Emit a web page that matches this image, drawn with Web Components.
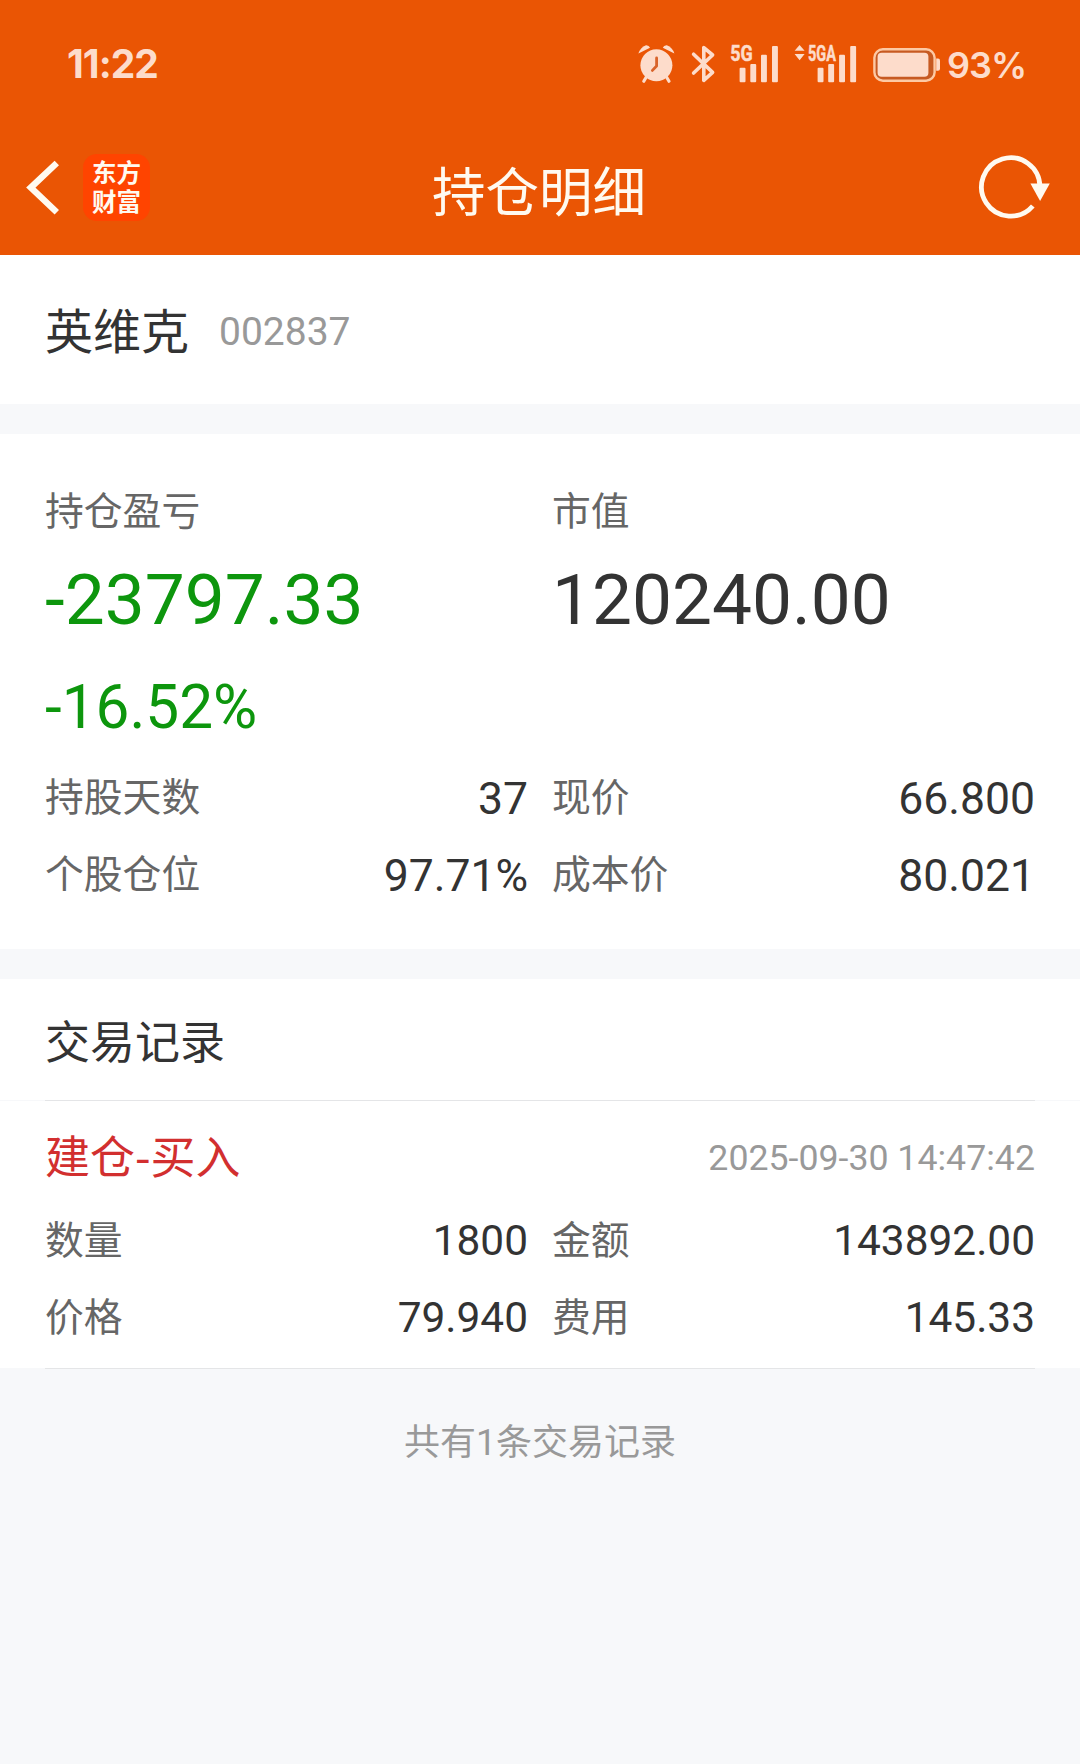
<!DOCTYPE html>
<html lang="zh-CN">
<head>
  <meta charset="utf-8">
  <meta name="viewport" content="width=device-width, initial-scale=1">
  <title>持仓明细</title>
  <style>
    body {
      margin: 0;
      min-height: 1764px;
      background: #f7f8fa;
      color: #333;
      font-family: Roboto, 'Noto Sans CJK SC', sans-serif;
    }
  </style>
</head>
<body>
  <status-bar time="11:22" battery="93%"></status-bar>
  <nav-bar>持仓明细</nav-bar>

  <stock-header code="002837">英维克</stock-header>

  <position-summary>
    <big-figure label="持仓盈亏" value="-23797.33" rate="-16.52%" class="down"></big-figure>
    <big-figure label="市值" value="120240.00"></big-figure>
    <data-pair label="持股天数">37</data-pair>
    <data-pair label="现价">66.800</data-pair>
    <data-pair label="个股仓位">97.71%</data-pair>
    <data-pair label="成本价">80.021</data-pair>
  </position-summary>

  <record-list heading="交易记录">
    <trade-record action="建仓-买入" time="2025-09-30 14:47:42">
      <data-pair label="数量">1800</data-pair>
      <data-pair label="金额">143892.00</data-pair>
      <data-pair label="价格">79.940</data-pair>
      <data-pair label="费用">145.33</data-pair>
    </trade-record>
    <span slot="footer">共有1条交易记录</span>
  </record-list>

  <script>
    class StatusBar extends HTMLElement {
      constructor () {
        super()
        this.shadow = this.attachShadow({ mode: 'open' })
      }

      connectedCallback () {
        this.render()
      }

      render () {
        this.shadow.innerHTML =
          /* html */`
            <style>
              :host {
                display: flex;
                justify-content: space-between;
                align-items: center;
                box-sizing: border-box;
                height: 120px;
                padding: 8px 54px 0 67px;
                background: #ea5504;
                color: #fddccb;
                font-family: Inter, Roboto, sans-serif;
              }

              .time {
                font-size: 39px;
                font-weight: 700;
                line-height: 40px;
                letter-spacing: -1px;
              }

              .icons {
                display: flex;
                align-items: center;
              }

              svg {
                display: block;
                overflow: visible;
                fill: currentColor;
              }

              .alarm { margin-right: 16px; }
              .bluetooth { margin-right: 14px; }
              .signal { margin-right: 17px; }
              .signal-a { margin-right: 15px; }
              .battery { margin-right: 6px; }

              text {
                font-family: Roboto, sans-serif;
                font-weight: 700;
                font-size: 22px;
                stroke: currentColor;
                stroke-width: 0.5px;
              }

              .percent {
                width: 79px;
                padding-top: 1px;
                font-size: 36px;
                font-weight: 600;
                line-height: 40px;
                letter-spacing: -1px;
                white-space: nowrap;
              }
            </style>

            <span class="time">${this.getAttribute('time')}</span>
            <div class="icons">
              <svg class="alarm" width="37" height="40" viewBox="0 0 37 40">
                <circle cx="18.4" cy="21.3" r="16"/>
                <path d="M0.4 9.4A13 13 0 0 1 8 1.2Q11 1 12 3.8Z"/>
                <path d="M36.4 9.4A13 13 0 0 0 28.8 1.2Q25.8 1 24.8 3.8Z"/>
                <path d="M8 33.5L5.8 37.2M28.8 33.5L31 37.2" stroke="currentColor" stroke-width="3.2" stroke-linecap="round"/>
                <path d="M18.6 14V22L14.4 26.4" fill="none" stroke="#d9632a" stroke-width="2.8" stroke-linecap="round" stroke-linejoin="round"/>
              </svg>
              <svg class="bluetooth" width="25" height="40" viewBox="0 0 25 40">
                <path d="M2.6 10.2L21.6 28.4L12.8 36.4V3.6L21.6 11L2.6 29" fill="none" stroke="currentColor" stroke-width="3.6" stroke-linecap="round" stroke-linejoin="round"/>
              </svg>
              <svg class="signal" width="48" height="40" viewBox="0 0 48 40">
                <text x="0.3" y="17" textLength="22.5" lengthAdjust="spacingAndGlyphs">5G</text>
                <rect x="9.6" y="23.8" width="5.9" height="14.4" rx="1"/>
                <rect x="20.3" y="20" width="5.9" height="18.2" rx="1"/>
                <rect x="31" y="10.8" width="5.9" height="27.4" rx="1"/>
                <rect x="42" y="2" width="5.9" height="36.2" rx="1"/>
              </svg>
              <svg class="signal-a" width="63" height="40" viewBox="0 0 63 40">
                <path d="M4.6 1L9.6 6.8H-0.4ZM4.6 16.2L9.6 10H-0.4Z"/>
                <text x="13" y="17" textLength="28" lengthAdjust="spacingAndGlyphs">5GA</text>
                <rect x="22.6" y="23.8" width="5.9" height="14.4" rx="1"/>
                <rect x="33.2" y="20" width="5.9" height="18.2" rx="1"/>
                <rect x="44.1" y="10.8" width="5.9" height="27.4" rx="1"/>
                <rect x="55.2" y="2" width="5.9" height="36.2" rx="1"/>
              </svg>
              <svg class="battery" width="68" height="40" viewBox="0 0 68 40">
                <rect x="1.4" y="5.3" width="60.2" height="31.4" rx="8.5" fill="#c75a22" stroke="#fdc9a4" stroke-width="2.4"/>
                <rect x="4.6" y="8.8" width="50.8" height="24" rx="4"/>
                <path d="M63.2 14.6H65Q67 14.6 67 16.6V24.8Q67 26.8 65 26.8H63.2Z"/>
              </svg>
              <span class="percent">${this.getAttribute('battery')}</span>
            </div>
          `
      }
    }

    class NavBar extends HTMLElement {
      constructor () {
        super()
        this.shadow = this.attachShadow({ mode: 'open' })
      }

      connectedCallback () {
        this.render()
      }

      render () {
        this.shadow.innerHTML =
          /* html */`
            <style>
              :host {
                display: grid;
                grid-template-columns: 1fr auto 1fr;
                align-items: center;
                box-sizing: border-box;
                height: 135px;
                padding: 0 28px 0 24px;
                background: #ea5504;
                color: #fffaf0;
              }

              svg {
                display: block;
                fill: none;
                stroke: currentColor;
              }

              .left {
                display: flex;
                align-items: center;
                gap: 21px;
              }

              .logo {
                display: flex;
                flex-direction: column;
                align-items: center;
                justify-content: center;
                width: 67px;
                height: 67px;
                border-radius: 14px;
                background: #ff4400;
                font-size: 24.5px;
                font-weight: 700;
                line-height: 29px;
              }

              h1 {
                margin: 0;
                padding: 13px 0 0 2px;
                font-size: 53.5px;
                font-weight: 400;
                line-height: 80px;
              }

              .refresh {
                justify-self: end;
                padding-bottom: 2px;
              }
            </style>

            <div class="left">
              <svg width="38" height="60" viewBox="0 0 38 60">
                <path d="M32.8 5L6.8 29.6L32.8 54.2" stroke-width="6.4"/>
              </svg>
              <div class="logo"><span>东方</span><span>财富</span></div>
            </div>
            <h1><slot></slot></h1>
            <svg class="refresh" width="74" height="66" viewBox="0 0 74 66">
              <path d="M61.9 32.5A29.2 29.2 0 1 0 54.8 52" stroke-width="4.8"/>
              <path d="M52.4 29.6H71.8L62.1 47Z" fill="currentColor" stroke="none"/>
            </svg>
          `
      }
    }

    class StockHeader extends HTMLElement {
      constructor () {
        super()
        this.shadow = this.attachShadow({ mode: 'open' })
      }

      connectedCallback () {
        this.render()
      }

      render () {
        this.shadow.innerHTML =
          /* html */`
            <style>
              :host {
                display: flex;
                align-items: center;
                gap: 30px;
                box-sizing: border-box;
                height: 149px;
                margin-bottom: 30px;
                padding: 0 45px;
                background: #fff;
              }

              .name {
                padding-top: 6px;
                font-size: 48px;
                line-height: 70px;
              }

              .code {
                padding-top: 4px;
                color: #999;
                font-size: 39px;
                line-height: 70px;
              }
            </style>

            <span class="name"><slot></slot></span>
            <span class="code">${this.getAttribute('code')}</span>
          `
      }
    }

    class PositionSummary extends HTMLElement {
      constructor () {
        super()
        this.shadow = this.attachShadow({ mode: 'open' })
      }

      connectedCallback () {
        this.render()
      }

      render () {
        this.shadow.innerHTML =
          /* html */`
            <style>
              :host {
                display: grid;
                grid-template-columns: 1fr 1fr;
                column-gap: 24px;
                align-content: start;
                box-sizing: border-box;
                height: 515px;
                margin-bottom: 30px;
                padding: 48px 45px 0;
                background: #fff;
              }
            </style>

            <slot></slot>
          `
      }
    }

    class BigFigure extends HTMLElement {
      constructor () {
        super()
        this.shadow = this.attachShadow({ mode: 'open' })
      }

      connectedCallback () {
        this.render()
      }

      render () {
        const rate = this.getAttribute('rate')

        this.shadow.innerHTML =
          /* html */`
            <style>
              :host {
                display: flex;
                flex-direction: column;
                height: 276px;
                color: #333;
              }

              :host(.down) {
                color: #0d960d;
              }

              .label {
                color: #666;
                font-size: 38.8px;
                line-height: 60px;
              }

              .value {
                font-size: 71.2px;
                line-height: 115px;
              }

              .rate {
                font-size: 60.3px;
                line-height: 102px;
              }
            </style>

            <span class="label">${this.getAttribute('label')}</span>
            <span class="value">${this.getAttribute('value')}</span>
            ${rate ? `<span class="rate">${rate}</span>` : ''}
          `
      }
    }

    class DataPair extends HTMLElement {
      constructor () {
        super()
        this.shadow = this.attachShadow({ mode: 'open' })
      }

      connectedCallback () {
        this.render()
      }

      render () {
        this.shadow.innerHTML =
          /* html */`
            <style>
              :host {
                display: flex;
                justify-content: space-between;
                height: 77px;
              }

              .label {
                padding-top: 1px;
                color: #666;
                font-size: 38.8px;
                line-height: 77px;
              }

              .value {
                padding-top: var(--value-drop, 3px);
                font-size: var(--value-size, 44.5px);
                line-height: 77px;
              }
            </style>

            <span class="label">${this.getAttribute('label')}</span>
            <span class="value"><slot></slot></span>
          `
      }
    }

    class RecordList extends HTMLElement {
      constructor () {
        super()
        this.shadow = this.attachShadow({ mode: 'open' })
      }

      connectedCallback () {
        this.render()
      }

      render () {
        this.shadow.innerHTML =
          /* html */`
            <style>
              :host {
                display: block;
              }

              h2 {
                box-sizing: border-box;
                height: 121px;
                margin: 0;
                padding: 5px 45px 0;
                background: #fff;
                font-size: 45px;
                font-weight: 400;
                line-height: 120px;
              }

              .footer {
                padding-top: 44px;
                color: #999;
                font-size: 36px;
                line-height: 60px;
                text-align: center;
              }
            </style>

            <h2>${this.getAttribute('heading')}</h2>
            <slot></slot>
            <div class="footer"><slot name="footer"></slot></div>
          `
      }
    }

    class TradeRecord extends HTMLElement {
      constructor () {
        super()
        this.shadow = this.attachShadow({ mode: 'open' })
      }

      connectedCallback () {
        this.render()
      }

      render () {
        this.shadow.innerHTML =
          /* html */`
            <style>
              :host {
                --value-size: 42.4px;
                --value-drop: 1px;
                display: block;
              }

              .line {
                height: 1px;
                margin: 0 45px;
                background: #e4e5e7;
              }

              .body {
                box-sizing: border-box;
                height: 267px;
                padding: 14px 45px 0;
                background: #fff;
              }

              .head {
                display: flex;
                justify-content: space-between;
                height: 86px;
              }

              .action {
                color: #d22f2f;
                font-family: 'Noto Sans CJK SC', sans-serif;
                font-size: 45px;
                line-height: 80px;
              }

              .time {
                color: #999;
                font-size: 35.7px;
                line-height: 86px;
              }

              .grid {
                display: grid;
                grid-template-columns: 1fr 1fr;
                column-gap: 24px;
              }
            </style>

            <div class="line"></div>
            <div class="body">
              <div class="head">
                <span class="action">${this.getAttribute('action')}</span>
                <span class="time">${this.getAttribute('time')}</span>
              </div>
              <div class="grid"><slot></slot></div>
            </div>
            <div class="line"></div>
          `
      }
    }

    customElements.define('status-bar', StatusBar)
    customElements.define('nav-bar', NavBar)
    customElements.define('stock-header', StockHeader)
    customElements.define('position-summary', PositionSummary)
    customElements.define('big-figure', BigFigure)
    customElements.define('data-pair', DataPair)
    customElements.define('record-list', RecordList)
    customElements.define('trade-record', TradeRecord)
  </script>
</body>
</html>
